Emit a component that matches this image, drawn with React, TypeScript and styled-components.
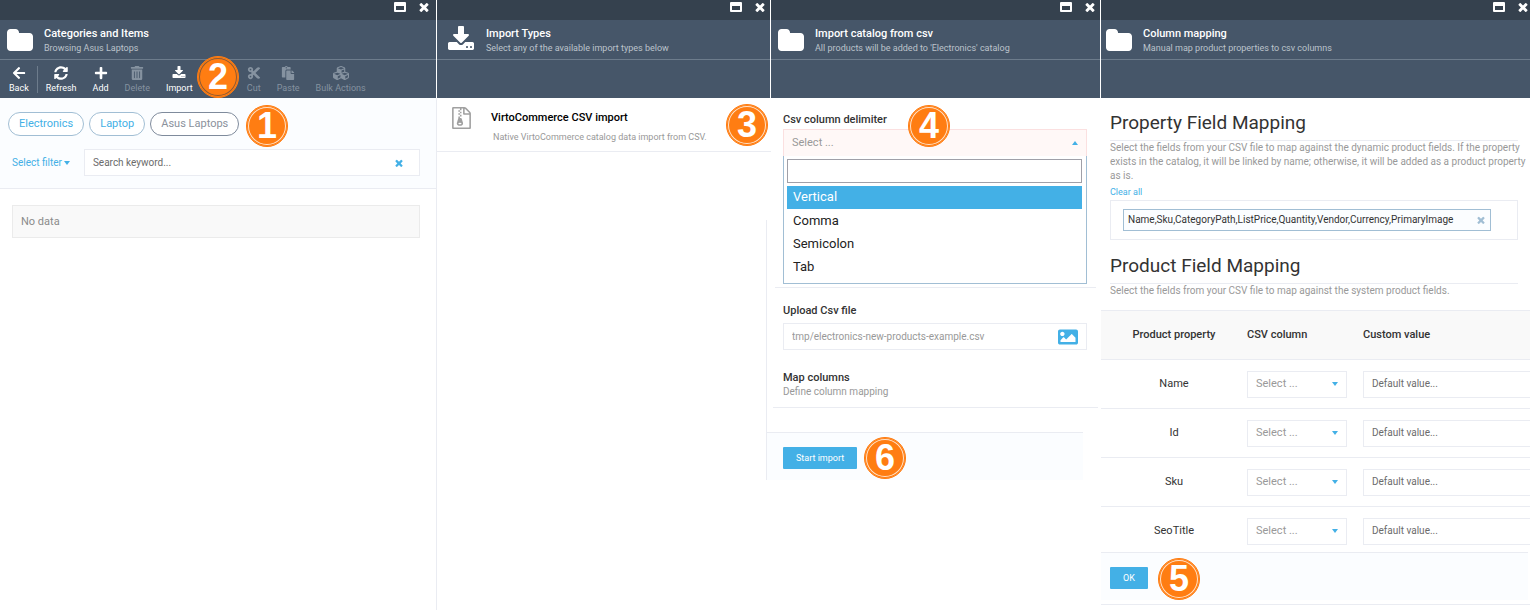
import React from 'react';
import styled, { createGlobalStyle, css } from 'styled-components';
import {
  FaArrowLeft,
  FaCubes,
  FaCut,
  FaImage,
  FaPaste,
  FaPlus,
  FaSyncAlt,
  FaTrashAlt,
} from 'react-icons/fa';

const color = {
  accent: '#43b0e6',
  topbar: '#35414e',
  header: '#465669',
  headerLine: '#6d7c8c',
  line: '#eaecf2',
  tint: '#fbfdff',
  text: '#333333',
  muted: '#999999',
  outline: '#a1bed4',
};

const GlobalStyle = createGlobalStyle`
  *, *::before, *::after { box-sizing: border-box; }
  body {
    margin: 0;
    background: #ffffff;
    color: ${color.text};
    font: 11px/14px Roboto, "Liberation Sans", sans-serif;
  }
  button, input, select { font: inherit; color: inherit; border-radius: 0; }
  button { background: none; border: 0; padding: 0; cursor: pointer; }
  h1, h2, p, ul { margin: 0; padding: 0; font-weight: 400; }
  a { color: ${color.accent}; text-decoration: none; }
`;

/* ---------- icons ---------- */

const DownloadIcon = ({ size }: { size: number }) => (
  <svg width={size} height={size} viewBox="0 0 1792 1792" fill="currentColor" aria-hidden="true">
    <path d="M1344 1344q0-26-19-45t-45-19-45 19-19 45 19 45 45 19 45-19 19-45zm256 0q0-26-19-45t-45-19-45 19-19 45 19 45 45 19 45-19 19-45zm128-224v320q0 40-28 68t-68 28h-1472q-40 0-68-28t-28-68v-320q0-40 28-68t68-28h465l135 136q58 56 136 56t136-56l136-136h464q40 0 68 28t28 68zm-325-569q17 41-14 70l-448 448q-18 19-45 19t-45-19l-448-448q-31-29-14-70 17-39 59-39h256v-448q0-26 19-45t45-19h256q26 0 45 19t19 45v448h256q42 0 59 39z" />
  </svg>
);

const FolderIcon = () => (
  <svg width="26" height="22" viewBox="64 128 1664 1408" fill="currentColor" aria-hidden="true">
    <path d="M1728 608v704q0 92-66 158t-158 66h-1216q-92 0-158-66t-66-158v-960q0-92 66-158t158-66h320q92 0 158 66t66 158v32h672q92 0 158 66t66 158z" />
  </svg>
);

const ArchiveIcon = () => (
  <svg width="19" height="22" viewBox="128 0 1536 1792" fill="currentColor" aria-hidden="true">
    <path d="M768 384v-128h-128v128h128zm128 128v-128h-128v128h128zm-128 128v-128h-128v128h128zm128 128v-128h-128v128h128zm700-388q28 28 48 76t20 88v1152q0 40-28 68t-68 28h-1344q-40 0-68-28t-28-68v-1600q0-40 28-68t68-28h896q40 0 88 20t76 48zm-444-244v376h376q-10-29-22-41l-313-313q-12-12-41-22zm384 1528v-1024h-416q-40 0-68-28t-28-68v-416h-128v128h-128v-128h-512v1536h1280zm-627-721l107 349q8 27 8 52 0 83-72.500 137.500t-183.500 54.500-183.500-54.500-72.500-137.500q0-25 8-52 21-63 120-396v-128h128v128h79q22 0 39 13t23 34zm-141 465q53 0 90.500-19t37.500-45-37.500-45-90.500-19-90.500 19-37.500 45 37.500 45 90.500 19z" />
  </svg>
);

const CrossIcon = ({ size }: { size: number }) => (
  <svg width={size} height={size} viewBox="240 240 1312 1312" fill="currentColor" aria-hidden="true">
    <path d="M1490 1322q0 40-28 68l-136 136q-28 28-68 28t-68-28l-294-294-294 294q-28 28-68 28t-68-28l-136-136q-28-28-28-68t28-68l294-294-294-294q-28-28-28-68t28-68l136-136q28-28 68-28t68 28l294 294 294-294q28-28 68-28t68 28l136 136q28 28 28 68t-28 68l-294 294 294 294q28 28 28 68z" />
  </svg>
);

const WindowIcon = () => (
  <svg width="12" height="10" viewBox="0 0 12 10" fill="currentColor" aria-hidden="true">
    <path fillRule="evenodd" d="M1 0h10a1 1 0 0 1 1 1v8a1 1 0 0 1-1 1H1a1 1 0 0 1-1-1V1a1 1 0 0 1 1-1zm1 4v4h8V4z" />
  </svg>
);

const Caret = ({ up = false }: { up?: boolean }) => (
  <svg width="6" height="4" viewBox="0 0 6 4" fill={color.accent} aria-hidden="true">
    <path d={up ? 'M0 4 3 0l3 4z' : 'M0 0h6L3 4z'} />
  </svg>
);

const CubesIcon = styled(FaCubes)`
  margin: -1px 0;
`;

/* ---------- blade shell ---------- */

const Workspace = styled.div`
  display: grid;
  grid-template-columns: 437fr 334fr 330fr 429fr;
  min-height: 100vh;
  overflow: hidden;
`;

const Panel = styled.section<{ $divided?: boolean }>`
  position: relative;
  display: flex;
  flex-direction: column;
  min-width: 0;
  ${(p) => p.$divided && css`border-right: 1px solid ${color.line};`}
`;

const PanelHead = styled.header<{ $last?: boolean; $bleed?: boolean }>`
  position: relative;
  height: 98px;
  background: ${color.header};
  color: #ffffff;
  border-right: ${(p) => (p.$last ? '0' : '1px solid #ffffff')};
  margin-right: ${(p) => (p.$bleed ? '-1px' : '0')};
`;

const WindowBar = styled.div<{ $edge?: number }>`
  display: flex;
  align-items: center;
  justify-content: flex-end;
  gap: 13px;
  height: 20px;
  padding: 0 ${(p) => p.$edge ?? 5}px 6px 0;
  background: ${color.topbar};
  button { display: flex; color: inherit; }
`;

const TitleRow = styled.div<{ $inset: number }>`
  display: flex;
  align-items: center;
  gap: 11px;
  height: 40px;
  padding-left: ${(p) => p.$inset}px;
  border-bottom: 1px solid ${color.headerLine};
`;

const Titles = styled.div`
  padding-top: 2px;
`;

const Title = styled.h1`
  font-size: 11px;
  line-height: 14px;
  font-weight: 500;
  white-space: nowrap;
`;

const Subtitle = styled.p`
  font-size: 9px;
  line-height: 14px;
  color: #bcc3cb;
  white-space: nowrap;
`;

const Toolbar = styled.nav`
  display: flex;
  align-items: flex-start;
  gap: 16px;
  padding: 6px 0 0 9px;
`;

const ToolButton = styled.button`
  display: flex;
  flex-direction: column;
  align-items: center;
  gap: 1px;
  color: #ffffff;
  font-size: 9px;
  line-height: 14px;
  white-space: nowrap;
  &:disabled { color: #8592a0; cursor: default; }
`;

const ToolDivider = styled.span`
  width: 1px;
  height: 27px;
  margin: 0 -8px;
  background: ${color.headerLine};
`;

const ToolGap = styled.span`
  width: 22px;
`;

const Circle = styled.span<{ $x: number; $y: number; $dark?: boolean }>`
  position: absolute;
  z-index: 3;
  left: ${(p) => p.$x}px;
  top: ${(p) => p.$y}px;
  display: grid;
  place-items: center;
  width: 42px;
  height: 42px;
  border-radius: 50%;
  background: #ff7d12;
  border: 1px solid #ff7d12;
  box-shadow: inset 0 0 0 1px #ff7d12, inset 0 0 0 2px ${(p) => (p.$dark ? '#8b5a35' : '#ffe3ca')};
  color: #ffffff;
  font: 700 36px/40px "Liberation Sans", Arial, sans-serif;
`;

type HeadProps = {
  icon: React.ReactNode;
  title: string;
  subtitle: string;
  inset?: number;
  edge?: number;
  last?: boolean;
  bleed?: boolean;
  children?: React.ReactNode;
};

const Head = ({ icon, title, subtitle, inset = 7, edge, last, bleed, children }: HeadProps) => (
  <PanelHead $last={last} $bleed={bleed}>
    <WindowBar $edge={edge}>
      <button type="button" aria-label="Maximize"><WindowIcon /></button>
      <button type="button" aria-label="Close"><CrossIcon size={10} /></button>
    </WindowBar>
    <TitleRow $inset={inset}>
      {icon}
      <Titles>
        <Title>{title}</Title>
        <Subtitle>{subtitle}</Subtitle>
      </Titles>
    </TitleRow>
    {children}
  </PanelHead>
);

/* ---------- categories ---------- */

const FilterArea = styled.div`
  height: 91px;
  padding: 14px 16px 0 8px;
  background: ${color.tint};
  border-bottom: 1px solid ${color.line};
`;

const Crumbs = styled.div`
  display: flex;
  gap: 5px;
`;

const Crumb = styled.button<{ $current?: boolean }>`
  height: 24px;
  padding: 0 10px 1px;
  border: 1px solid ${(p) => (p.$current ? '#7f8b9c' : color.outline)};
  border-radius: 12px;
  background: #ffffff;
  color: ${(p) => (p.$current ? '#8a919c' : color.accent)};
`;

const SearchRow = styled.div`
  display: flex;
  align-items: center;
  gap: 14px;
  padding: 13px 0 0 4px;
`;

const FilterButton = styled.button`
  display: flex;
  align-items: center;
  gap: 2px;
  color: ${color.accent};
  font-size: 10px;
  white-space: nowrap;
`;

const Field = styled.div<{ $edge?: number }>`
  display: flex;
  align-items: center;
  flex: 1;
  height: 27px;
  padding: 0 ${(p) => p.$edge ?? 8}px 0 8px;
  border: 1px solid ${color.line};
  background: #ffffff;
  button { display: flex; color: ${color.accent}; }
`;

const TextInput = styled.input<{ $muted?: boolean }>`
  flex: 1;
  min-width: 0;
  padding: 0;
  border: 0;
  outline: 0;
  background: transparent;
  font-size: 10px;
  color: ${(p) => (p.$muted ? color.muted : color.text)};
  &::placeholder { color: #6b6b6b; opacity: 1; }
`;

const EmptyNote = styled.p`
  margin: 16px 16px 0 12px;
  padding: 8px;
  border: 1px solid #ebebeb;
  background: #f9f9f9;
  color: #8b8b8b;
  line-height: 15px;
`;

/* ---------- import types ---------- */

const TypeItem = styled.a`
  display: flex;
  gap: 20px;
  height: 54px;
  padding: 9px 0 0 15px;
  border-bottom: 1px solid ${color.line};
  svg { flex: none; color: #a0a0a0; }
`;

const TypeText = styled.div`
  padding-top: 4px;
  h2 { font-size: 11px; line-height: 14px; font-weight: 500; color: #000000; }
  p { padding: 5px 0 0 2px; font-size: 9px; line-height: 14px; color: ${color.muted}; white-space: nowrap; }
`;

const NextEdge = styled.div`
  width: 1px;
  height: 260px;
  margin: 68px 4px 0 auto;
  background: ${color.line};
`;

/* ---------- csv import ---------- */

const ImportForm = styled.form`
  display: flex;
  flex-direction: column;
`;

const FormBlock = styled.div<{ $height: number; $top: number; $side: number }>`
  height: ${(p) => p.$height}px;
  margin: 0 ${(p) => p.$side + 1}px 0 ${(p) => p.$side}px;
  padding: ${(p) => p.$top}px ${(p) => 13 - p.$side}px 0 ${(p) => 12 - p.$side}px;
  border-bottom: 1px solid ${color.line};
`;

const Label = styled.label`
  display: block;
  font-size: 11px;
  font-weight: 500;
  line-height: 14px;
`;

const Combo = styled.button`
  display: flex;
  align-items: center;
  justify-content: space-between;
  width: 100%;
  height: 27px;
  margin-top: 2px;
  padding: 0 8px;
  border: 1px solid #fbe0e0;
  border-bottom: 0;
  background: #fff8f7;
  color: ${color.muted};
`;

const DropList = styled.div`
  position: relative;
  z-index: 1;
  height: 128px;
  padding: 3px 4px 3px 3px;
  border: 1px solid ${color.outline};
  border-top: 0;
  background: #ffffff;
`;

const DropSearch = styled.input`
  display: block;
  width: 100%;
  height: 24px;
  margin-bottom: 3px;
  border: 1px solid #a0a0a8;
  background: #ffffff;
  outline: 0;
`;

const Options = styled.ul`
  list-style: none;
`;

const Option = styled.li<{ $active?: boolean }>`
  height: 23px;
  margin-bottom: ${(p) => (p.$active ? 1 : 0)}px;
  padding-left: 6px;
  font-size: 13px;
  line-height: 22px;
  color: ${(p) => (p.$active ? '#ffffff' : '#222222')};
  background: ${(p) => (p.$active ? color.accent : 'transparent')};
`;

const UploadField = styled(Field)`
  margin-top: 5px;
`;

const MapLink = styled.div`
  padding-top: 21px;
  p { font-size: 10px; line-height: 14px; color: ${color.muted}; }
`;

const Footer = styled.footer<{ $wide?: boolean }>`
  position: relative;
  z-index: 1;
  height: 48px;
  padding: 14px 0 0 ${(p) => (p.$wide ? 9 : 16)}px;
  margin: ${(p) => (p.$wide ? '0 2px 0 0' : '24px 18px 0 -4px')};
  border-top: 1px solid ${color.line};
  background: ${color.tint};
`;

const Primary = styled.button`
  height: 22px;
  padding: 0 13px;
  border-radius: 1px;
  background: ${color.accent};
  color: #ffffff;
  font-size: 9px;
`;

/* ---------- column mapping ---------- */

const Mapping = styled.div`
  padding: 10px 12px 0 9px;
`;

const SectionTitle = styled.h2`
  height: 33px;
  font-size: 19px;
  line-height: 30px;
  border-bottom: 1px solid ${color.line};
`;

const Hint = styled.p`
  margin-right: -12px;
  font-size: 10px;
  line-height: 14px;
  color: ${color.muted};
`;

const ClearLink = styled.a`
  display: block;
  margin-top: 2px;
  font-size: 9px;
  line-height: 14px;
`;

const TagBox = styled.div`
  height: 40px;
  margin: 1px 0 11px;
  padding: 8px 12px;
  border: 1px solid ${color.line};
`;

const Tag = styled.span`
  display: inline-flex;
  align-items: center;
  gap: 24px;
  height: 22px;
  padding: 0 5px 0 4px;
  border: 1px solid ${color.outline};
  background: ${color.tint};
  font-size: 10px;
  white-space: nowrap;
  button { display: flex; color: ${color.outline}; }
`;

const TableClip = styled.div`
  height: 242px;
  margin-top: 12px;
  overflow: hidden;
`;

const MapTable = styled.table`
  width: calc(100% + 20px);
  border-collapse: separate;
  border-spacing: 0;
  table-layout: fixed;
  th, td { height: 49px; padding: 0; border-bottom: 1px solid ${color.line}; font-weight: 400; text-align: center; }
  thead th {
    height: 50px;
    border-top: 1px solid ${color.line};
    background: #f9f9f9;
    font-weight: 500;
    text-align: left;
  }
  thead th:first-child { text-align: center; }
`;

const PropertyCol = styled.col`
  width: 146px;
`;

const SourceCol = styled.col`
  width: 116px;
`;

const SelectBox = styled.div`
  display: grid;
  align-items: center;
  width: 100px;
  > * { grid-area: 1 / 1; }
  svg { justify-self: end; margin-right: 9px; pointer-events: none; }
`;

const SelectInput = styled.select`
  width: 100%;
  height: 27px;
  padding: 0 8px;
  border: 1px solid ${color.line};
  background: #ffffff;
  color: ${color.muted};
  appearance: none;
`;

const Bottom = styled.div`
  height: 5px;
  border-bottom: 1px solid ${color.line};
`;

const properties = ['Name', 'Id', 'Sku', 'SeoTitle'];
const delimiters = ['Vertical', 'Comma', 'Semicolon', 'Tab'];

const App = () => (
  <>
    <GlobalStyle />
    <Workspace>
      <Panel $divided>
        <Head icon={<FolderIcon />} title="Categories and Items" subtitle="Browsing Asus Laptops" edge={7} bleed>
          <Toolbar>
            <ToolButton type="button"><FaArrowLeft size={14} />Back</ToolButton>
            <ToolDivider />
            <ToolButton type="button"><FaSyncAlt size={14} />Refresh</ToolButton>
            <ToolButton type="button"><FaPlus size={14} />Add</ToolButton>
            <ToolButton type="button" disabled><FaTrashAlt size={14} />Delete</ToolButton>
            <ToolButton type="button"><DownloadIcon size={14} />Import</ToolButton>
            <ToolGap />
            <ToolButton type="button" disabled><FaCut size={14} />Cut</ToolButton>
            <ToolButton type="button" disabled><FaPaste size={14} />Paste</ToolButton>
            <ToolButton type="button" disabled><CubesIcon size={16} />Bulk Actions</ToolButton>
          </Toolbar>
          <Circle $x={197} $y={56} $dark>2</Circle>
        </Head>
        <FilterArea>
          <Crumbs>
            <Crumb type="button">Electronics</Crumb>
            <Crumb type="button">Laptop</Crumb>
            <Crumb type="button" $current>Asus Laptops</Crumb>
          </Crumbs>
          <SearchRow>
            <FilterButton type="button">Select filter <Caret /></FilterButton>
            <Field $edge={16}>
              <TextInput aria-label="Search keyword" placeholder="Search keyword..." />
              <button type="button" aria-label="Clear search"><CrossIcon size={8} /></button>
            </Field>
          </SearchRow>
        </FilterArea>
        <EmptyNote>No data</EmptyNote>
        <Circle $x={246} $y={105}>1</Circle>
      </Panel>

      <Panel>
        <Head icon={<DownloadIcon size={28} />} title="Import Types" subtitle="Select any of the available import types below" inset={10} />
        <TypeItem href="#csv">
          <ArchiveIcon />
          <TypeText>
            <h2>VirtoCommerce CSV import</h2>
            <p>Native VirtoCommerce catalog data import from CSV.</p>
          </TypeText>
        </TypeItem>
        <NextEdge />
        <Circle $x={289} $y={104}>3</Circle>
      </Panel>

      <Panel>
        <Head icon={<FolderIcon />} title="Import catalog from csv" subtitle="All products will be added to 'Electronics' catalog" />
        <ImportForm>
          <FormBlock $height={190} $top={15} $side={4}>
            <Label htmlFor="delimiter">Csv column delimiter</Label>
            <Combo id="delimiter" type="button" aria-haspopup="listbox" aria-expanded="true">Select ...<Caret up /></Combo>
            <DropList>
              <DropSearch aria-label="Find delimiter" />
              <Options role="listbox" aria-label="Delimiters">
                {delimiters.map((d, i) => (
                  <Option key={d} role="option" aria-selected={i === 0} $active={i === 0}>{d}</Option>
                ))}
              </Options>
            </DropList>
          </FormBlock>
          <FormBlock $height={120} $top={16} $side={2}>
            <Label htmlFor="csv-file">Upload Csv file</Label>
            <UploadField>
              <TextInput id="csv-file" $muted readOnly value="tmp/electronics-new-products-example.csv" />
              <button type="button" aria-label="Choose file"><FaImage size={20} /></button>
            </UploadField>
            <MapLink>
              <Label as="h2">Map columns</Label>
              <p>Define column mapping</p>
            </MapLink>
          </FormBlock>
          <Footer>
            <Primary type="button">Start import</Primary>
          </Footer>
        </ImportForm>
        <Circle $x={137} $y={105}>4</Circle>
        <Circle $x={93} $y={437}>6</Circle>
      </Panel>

      <Panel>
        <Head icon={<FolderIcon />} title="Column mapping" subtitle="Manual map product properties to csv columns" inset={5} edge={2} last />
        <Mapping>
          <SectionTitle>Property Field Mapping</SectionTitle>
          <Hint>
            Select the fields from your CSV file to map against the dynamic product fields. If the property exists in the
            catalog, it will be linked by name; otherwise, it will be added as a product property as is.
          </Hint>
          <ClearLink href="#clear">Clear all</ClearLink>
          <TagBox>
            <Tag>
              Name,Sku,CategoryPath,ListPrice,Quantity,Vendor,Currency,PrimaryImage
              <button type="button" aria-label="Remove mapping"><CrossIcon size={8} /></button>
            </Tag>
          </TagBox>
          <SectionTitle>Product Field Mapping</SectionTitle>
          <Hint>Select the fields from your CSV file to map against the system product fields.</Hint>
        </Mapping>
        <TableClip>
          <MapTable>
            <colgroup>
              <PropertyCol />
              <SourceCol />
              <col />
            </colgroup>
            <thead>
              <tr>
                <th scope="col">Product property</th>
                <th scope="col">CSV column</th>
                <th scope="col">Custom value</th>
              </tr>
            </thead>
            <tbody>
              {properties.map((name) => (
                <tr key={name}>
                  <th scope="row">{name}</th>
                  <td>
                    <SelectBox>
                      <SelectInput aria-label={`CSV column for ${name}`} defaultValue="">
                        <option value="">Select ...</option>
                      </SelectInput>
                      <Caret />
                    </SelectBox>
                  </td>
                  <td>
                    <Field>
                      <TextInput aria-label={`Custom value for ${name}`} placeholder="Default value..." />
                    </Field>
                  </td>
                </tr>
              ))}
            </tbody>
          </MapTable>
        </TableClip>
        <Footer $wide>
          <Primary type="button">OK</Primary>
        </Footer>
        <Bottom />
        <Circle $x={57} $y={558}>5</Circle>
      </Panel>
    </Workspace>
  </>
);

export default App;
